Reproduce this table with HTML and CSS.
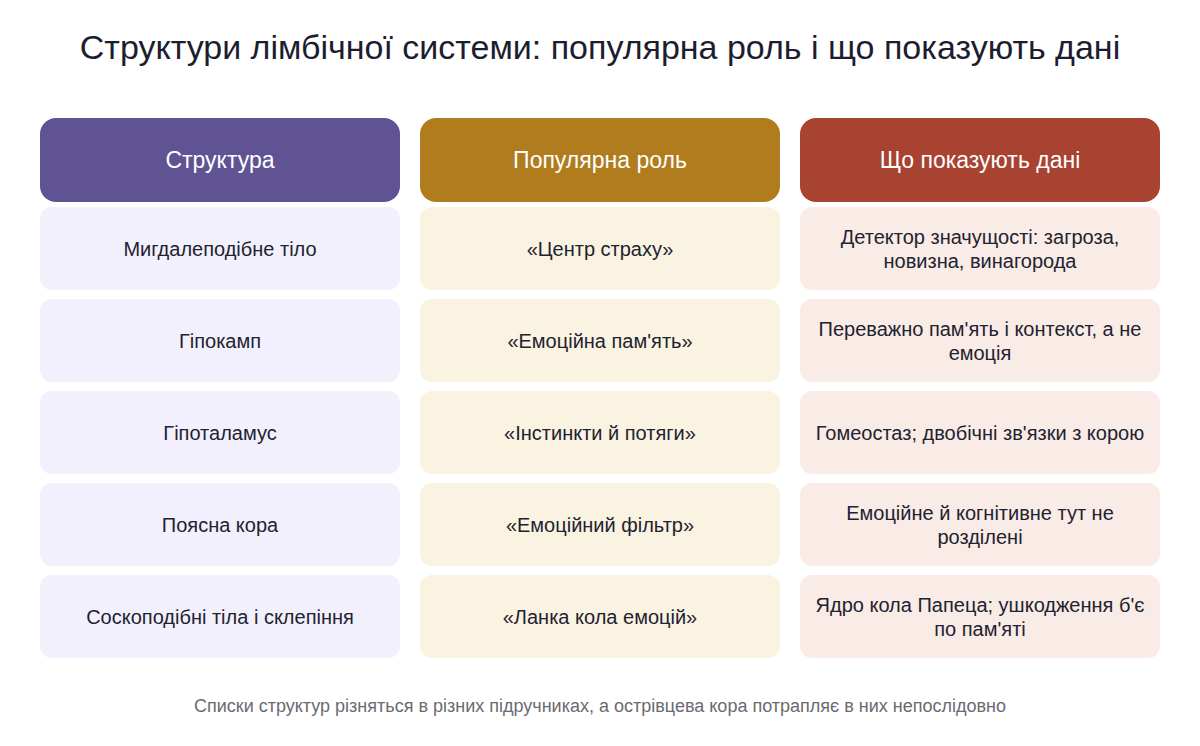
FILE: index.html
```html
<!DOCTYPE html>
<html lang="uk">
<head>
<meta charset="utf-8">
<title>Структури лімбічної системи</title>
<link rel="stylesheet" href="styles.css">
</head>
<body>
<main class="page">
  <h1 class="title">Структури лімбічної системи: популярна роль і що показують дані</h1>
  <div class="heads">
    <div class="head head-purple">Структура</div>
    <div class="head head-gold">Популярна роль</div>
    <div class="head head-red">Що показують дані</div>
  </div>
  <div class="rows">
    <div class="cell c-purple">Мигдалеподібне тіло</div>
    <div class="cell c-gold">«Центр страху»</div>
    <div class="cell c-red">Детектор значущості: загроза, новизна, винагорода</div>

    <div class="cell c-purple">Гіпокамп</div>
    <div class="cell c-gold">«Емоційна пам'ять»</div>
    <div class="cell c-red">Переважно пам'ять і контекст, а не емоція</div>

    <div class="cell c-purple">Гіпоталамус</div>
    <div class="cell c-gold">«Інстинкти й потяги»</div>
    <div class="cell c-red">Гомеостаз; двобічні зв'язки з корою</div>

    <div class="cell c-purple">Поясна кора</div>
    <div class="cell c-gold">«Емоційний фільтр»</div>
    <div class="cell c-red">Емоційне й когнітивне тут не розділені</div>

    <div class="cell c-purple">Соскоподібні тіла і склепіння</div>
    <div class="cell c-gold">«Ланка кола емоцій»</div>
    <div class="cell c-red">Ядро кола Папеца; ушкодження б'є по пам'яті</div>
  </div>
  <p class="note">Списки структур різняться в різних підручниках, а острівцева кора потрапляє в них непослідовно</p>
</main>
</body>
</html>
```

FILE: styles.css
```css
* { box-sizing: border-box; }
html, body {
  margin: 0;
  padding: 0;
  background: #ffffff;
}
body {
  font-family: "Liberation Sans", Arial, sans-serif;
  color: #222230;
}
.page {
  width: 1200px;
  height: 746px;
  padding: 27px 40px 0;
  display: flex;
  flex-direction: column;
}
.title {
  margin: 0;
  font-size: 34px;
  line-height: 40px;
  font-weight: 400;
  text-align: center;
  color: #1d1d30;
}
.heads,
.rows {
  display: grid;
  grid-template-columns: repeat(3, 360px);
  column-gap: 20px;
}
.heads {
  margin-top: 51px;
  grid-template-rows: 84px;
}
.rows {
  margin-top: 5px;
  grid-template-rows: repeat(5, 83px);
  row-gap: 9px;
}
.head {
  display: flex;
  align-items: center;
  justify-content: center;
  border-radius: 16px;
  color: #ffffff;
  font-size: 23px;
}
.head-purple { background: #5f5394; }
.head-gold { background: #b07c1e; }
.head-red { background: #a84231; }
.cell {
  display: flex;
  align-items: center;
  justify-content: center;
  text-align: center;
  border-radius: 12px;
  padding: 0 12px;
  font-size: 20px;
  line-height: 24px;
  color: #222230;
}
.c-purple { background: #f2f0fc; }
.c-gold { background: #faf3e2; }
.c-red { background: #f9ebe6; }
.note {
  margin: 37px 0 0;
  text-align: center;
  font-size: 18px;
  line-height: 22px;
  color: #6a6a72;
}
```
